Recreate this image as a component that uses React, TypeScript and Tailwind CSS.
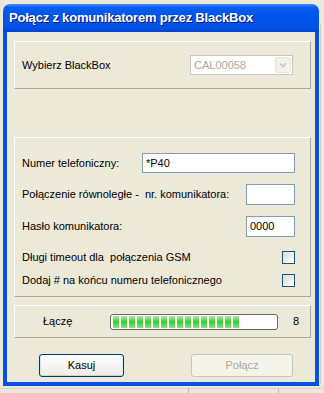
import React from 'react'

const font = { fontFamily: '"Liberation Sans", Arial, sans-serif' }

function Panel({ className = '', children }: { className?: string; children?: React.ReactNode }) {
  return (
    <div className={`box-border border-t border-l border-t-white border-l-white border-r border-b border-r-[#ACA899] border-b-[#ACA899] ${className}`}>
      {children}
    </div>
  )
}

function TextBox({ value = '', className = '' }: { value?: string; className?: string }) {
  return (
    <div className={`box-border h-[20px] border border-[#7F9DB9] bg-white pl-[3px] flex items-center text-black ${className}`}>
      {value}
    </div>
  )
}

function CheckBox() {
  return <div className="box-border w-[13px] h-[13px] border border-[#1C5180] bg-gradient-to-br from-[#DCDCD7] to-white" />
}

function Progress({ blocks }: { blocks: number }) {
  return (
    <div className="box-border w-[168px] h-[16px] rounded-[3px] border border-[#686868] bg-white flex items-center pl-[2px] gap-[2px]">
      {Array.from({ length: blocks }).map((_, i) => (
        <div key={i} className="w-[6px] h-[12px] bg-gradient-to-b from-[#A6EE9C] via-[#2ECF2E] to-[#80E27C]" />
      ))}
    </div>
  )
}

export default function App() {
  return (
    <div className="relative w-[324px] h-[393px] bg-[#ECE9D8] overflow-hidden text-[11px] text-black" style={font}>
      {/* background window bits */}
      <div className="absolute right-[3px] top-[24px] w-px h-[360px] bg-[#D4D0C8]" />
      <div className="absolute left-0 right-0 bottom-[4px] h-px bg-[#D4D0C8]" />
      <div className="absolute left-[188px] bottom-0 w-px h-[5px] bg-[#C0BCB0]" />
      <div className="absolute left-[278px] bottom-0 w-px h-[5px] bg-[#C0BCB0]" />

      <div className="ml-[3px] mt-[4px] w-[316px] h-[382px] flex flex-col">
        {/* Title bar */}
        <div className="h-[28px] rounded-t-[7px] bg-[linear-gradient(to_bottom,#3C8EFF_0%,#0A5EF0_12%,#0055EA_40%,#0052E6_85%,#0043CF_100%)] pl-[6px] flex items-center shrink-0">
          <span className="text-white font-bold text-[13px] tracking-[-0.2px] [text-shadow:1px_1px_#0A1883]">
            Połącz z komunikatorem przez BlackBox
          </span>
        </div>

        {/* Body */}
        <div className="flex-1 box-border border-x-[4px] border-b-[4px] border-[#0751E6] bg-[#ECE9D8] flex flex-col pl-[7px]">
          <Panel className="mt-[9px] w-[297px] h-[48px] flex items-center justify-between pl-[7px] pr-[17px]">
            <span>Wybierz BlackBox</span>
            <div className="box-border w-[103px] h-[20px] border border-[#C9C7BA] bg-white flex items-center p-[1px]">
              <div className="flex-1 pl-[2px] text-[#ACA899]">CAL00058</div>
              <div className="box-border w-[16px] h-[16px] rounded-[2px] border border-[#E8E6DC] bg-[#F2F1EA] flex items-center justify-center">
                <svg width="8" height="6" viewBox="0 0 8 6">
                  <path d="M1 1.5 L4 4.5 L7 1.5" fill="none" stroke="#C9C7BA" strokeWidth="1.6" />
                </svg>
              </div>
            </div>
          </Panel>

          <Panel className="mt-[48px] w-[297px] h-[160px] flex flex-col pt-[15px] pl-[7px] pr-[15px]">
            <div className="flex items-center justify-between h-[20px]">
              <span>Numer telefoniczny:</span>
              <TextBox value="*P40" className="w-[153px]" />
            </div>
            <div className="flex items-center justify-between h-[21px] mt-[11px]">
              <span>Połączenie równoległe -&nbsp; nr. komunikatora:</span>
              <TextBox className="w-[49px] h-[21px]" />
            </div>
            <div className="flex items-center justify-between h-[21px] mt-[11px]">
              <span>Hasło komunikatora:</span>
              <TextBox value="0000" className="w-[49px] h-[21px]" />
            </div>
            <div className="flex items-center justify-between h-[13px] mt-[14px]">
              <span>Długi timeout dla&nbsp; połączenia GSM</span>
              <CheckBox />
            </div>
            <div className="flex items-center justify-between h-[13px] mt-[10px]">
              <span>Dodaj # na końcu numeru telefonicznego</span>
              <CheckBox />
            </div>
          </Panel>

          <Panel className="mt-[8px] w-[297px] h-[33px] flex items-center pl-[28px]">
            <span className="w-[67px]">Łączę</span>
            <Progress blocks={16} />
            <span className="ml-[15px]">8</span>
          </Panel>

          <div className="mt-[16px] flex justify-between pl-[25px] pr-[22px]">
            <button className="box-border w-[85px] h-[23px] rounded-[3px] border border-[#003C74] bg-gradient-to-b from-white to-[#ECEBE6] shadow-[inset_0_-1px_0_#D6D0C5,inset_1px_0_0_#CEE7FF,inset_-1px_0_0_#CEE7FF] text-black text-[11px]" style={font}>
              Kasuj
            </button>
            <button className="box-border w-[102px] h-[23px] rounded-[3px] border border-[#C9C7BA] bg-[#F5F4EA] text-[#ACA899] text-[11px]" style={font}>
              Połącz
            </button>
          </div>
        </div>
      </div>
    </div>
  )
}
